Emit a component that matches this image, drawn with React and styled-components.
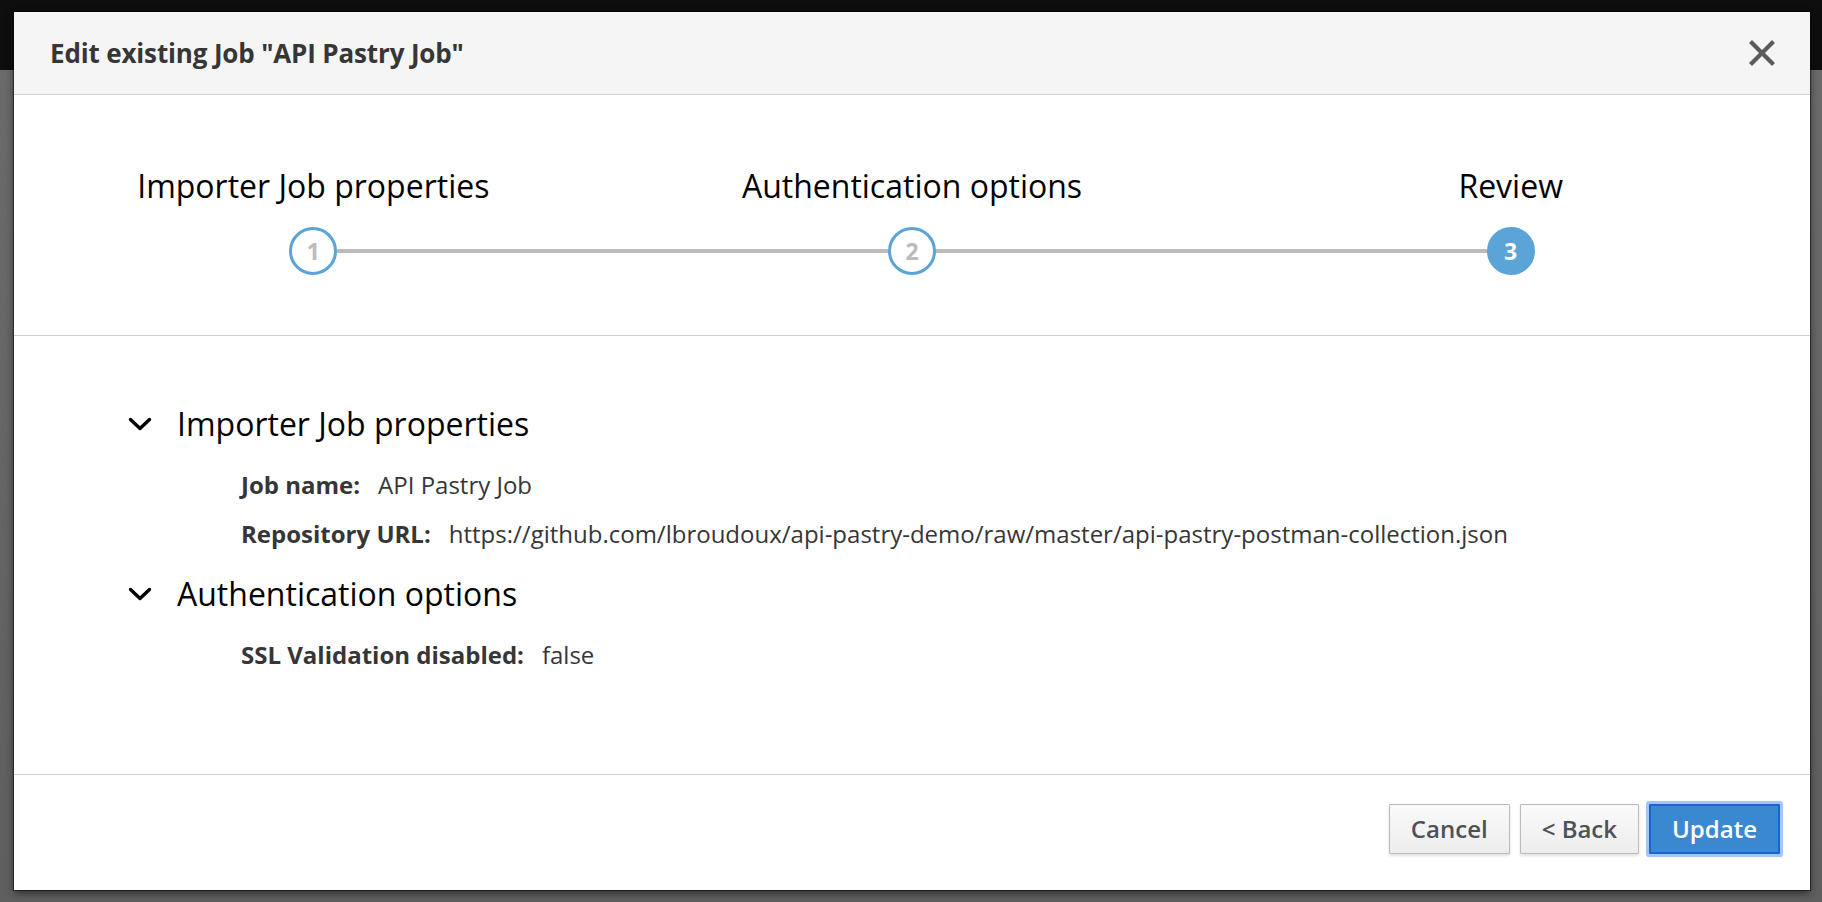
import React from "react";
import styled, { createGlobalStyle } from "styled-components";

const GlobalStyle = createGlobalStyle`
  html, body { margin: 0; padding: 0; }
  body {
    font-family: "Open Sans", "Liberation Sans", sans-serif;
    background: #666;
  }
  * { box-sizing: border-box; }
`;

const Backdrop = styled.div`
  width: 1822px;
  height: 902px;
  padding: 12px 12px 12px 14px;
  display: flex;
  background: linear-gradient(
    to bottom,
    #0e0e0e 0,
    #0e0e0e 70px,
    #6b6b6b 70px,
    #5f5f5f 100%
  );
`;

const Modal = styled.div`
  width: 1796px;
  height: 878px;
  background: #fff;
  display: flex;
  flex-direction: column;
  box-shadow: 0 0 0 1px rgba(0, 0, 0, 0.45), 0 3px 8px rgba(0, 0, 0, 0.55);
`;

const Header = styled.div`
  height: 83px;
  flex: none;
  background: #f5f5f5;
  border-bottom: 1px solid #d1d1d1;
  display: flex;
  align-items: center;
  justify-content: space-between;
  padding: 0 34px 0 36px;
`;

const Title = styled.h4`
  margin: 0;
  font-size: 26px;
  font-weight: 700;
  color: #363636;
  letter-spacing: -0.15px;
`;

const CloseButton = styled.button`
  border: 0;
  background: transparent;
  padding: 0;
  width: 28px;
  height: 28px;
  display: flex;
  align-items: center;
  justify-content: center;
  cursor: pointer;
`;

const Steps = styled.div`
  height: 241px;
  flex: none;
  border-bottom: 1px solid #d1d1d1;
  padding-top: 69px;
  display: flex;
  flex-direction: column;
  gap: 19px;
`;

const StepGrid = styled.div`
  display: grid;
  grid-template-columns: repeat(3, 1fr);
`;

const StepLabel = styled.div`
  text-align: center;
  font-size: 32px;
  line-height: 44px;
  color: #030303;
`;

const StepCell = styled.div`
  display: flex;
  align-items: center;
`;

const Connector = styled.div`
  flex: 1;
  height: 4px;
  background: ${(p) => (p.$hidden ? "transparent" : "#bbb")};
`;

const StepCircle = styled.div`
  width: 48px;
  height: 48px;
  border-radius: 50%;
  border: 3px solid #5ba4d8;
  background: ${(p) => (p.$active ? "#5ba4d8" : "#fff")};
  color: ${(p) => (p.$active ? "#fff" : "#bbb")};
  font-size: 23px;
  font-weight: 700;
  display: flex;
  align-items: center;
  justify-content: center;
  flex: none;
`;

const Body = styled.div`
  flex: 1;
  padding: 66px 0 0 114px;
  border-bottom: 1px solid #d1d1d1;
  display: flex;
  flex-direction: column;
`;

const Section = styled.section`
  display: flex;
  flex-direction: column;
  margin-bottom: 23px;
`;

const SectionHeading = styled.div`
  display: flex;
  align-items: center;
  gap: 25px;
  font-size: 32px;
  line-height: 44px;
  color: #030303;
  margin-bottom: 24px;
`;

const Rows = styled.dl`
  margin: 0;
  padding-left: 113px;
  display: flex;
  flex-direction: column;
  gap: 19px;
`;

const Row = styled.div`
  display: flex;
  align-items: baseline;
  gap: 18px;
  font-size: 24px;
  line-height: 30px;
  color: #363636;
`;

const Term = styled.dt`
  font-weight: 700;
`;

const Value = styled.dd`
  margin: 0;
`;

const Footer = styled.div`
  height: 115px;
  flex: none;
  display: flex;
  align-items: center;
  justify-content: flex-end;
  gap: 10px;
  padding: 0 30px 8px 0;
`;

const Button = styled.button`
  height: 50px;
  padding: 0 21px;
  font-family: inherit;
  font-size: 24px;
  font-weight: 600;
  border-radius: 1px;
  cursor: pointer;
  color: ${(p) => (p.$primary ? "#fff" : "#4d5258")};
  background: ${(p) =>
    p.$primary
      ? "#3a88d0"
      : "linear-gradient(to bottom, #fafafa 0, #ededed 100%)"};
  border: ${(p) => (p.$primary ? "2px solid #1f62d1" : "1px solid #bbb")};
  box-shadow: ${(p) =>
    p.$primary
      ? "0 0 0 3px rgba(90, 150, 240, 0.55)"
      : "0 2px 3px rgba(3, 3, 3, 0.12)"};
`;

const Chevron = () => (
  <svg width="24" height="16" viewBox="0 0 24 16" aria-hidden="true">
    <path
      d="M2.5 3.5 L12 12.5 L21.5 3.5"
      fill="none"
      stroke="#030303"
      strokeWidth="3.4"
      strokeLinecap="round"
      strokeLinejoin="round"
    />
  </svg>
);

const CloseIcon = () => (
  <svg width="26" height="26" viewBox="0 0 26 26" aria-hidden="true">
    <path
      d="M3 3 L23 23 M23 3 L3 23"
      stroke="#5b5b5b"
      strokeWidth="4.2"
      strokeLinecap="square"
    />
  </svg>
);

const steps = [
  { n: 1, label: "Importer Job properties" },
  { n: 2, label: "Authentication options" },
  { n: 3, label: "Review", active: true },
];

const sections = [
  {
    title: "Importer Job properties",
    rows: [
      ["Job name:", "API Pastry Job"],
      [
        "Repository URL:",
        "https://github.com/lbroudoux/api-pastry-demo/raw/master/api-pastry-postman-collection.json",
      ],
    ],
  },
  {
    title: "Authentication options",
    rows: [["SSL Validation disabled:", "false"]],
  },
];

export default function App() {
  return (
    <>
      <GlobalStyle />
      <Backdrop>
        <Modal role="dialog">
          <Header>
            <Title>Edit existing Job "API Pastry Job"</Title>
            <CloseButton aria-label="Close">
              <CloseIcon />
            </CloseButton>
          </Header>
          <Steps>
            <StepGrid>
              {steps.map((s) => (
                <StepLabel key={s.n}>{s.label}</StepLabel>
              ))}
            </StepGrid>
            <StepGrid>
              {steps.map((s, i) => (
                <StepCell key={s.n}>
                  <Connector $hidden={i === 0} />
                  <StepCircle $active={s.active}>{s.n}</StepCircle>
                  <Connector $hidden={i === steps.length - 1} />
                </StepCell>
              ))}
            </StepGrid>
          </Steps>
          <Body>
            {sections.map((sec) => (
              <Section key={sec.title}>
                <SectionHeading>
                  <Chevron />
                  {sec.title}
                </SectionHeading>
                <Rows>
                  {sec.rows.map(([t, v]) => (
                    <Row key={t}>
                      <Term>{t}</Term>
                      <Value>{v}</Value>
                    </Row>
                  ))}
                </Rows>
              </Section>
            ))}
          </Body>
          <Footer>
            <Button>Cancel</Button>
            <Button>&lt; Back</Button>
            <Button $primary>Update</Button>
          </Footer>
        </Modal>
      </Backdrop>
    </>
  );
}
